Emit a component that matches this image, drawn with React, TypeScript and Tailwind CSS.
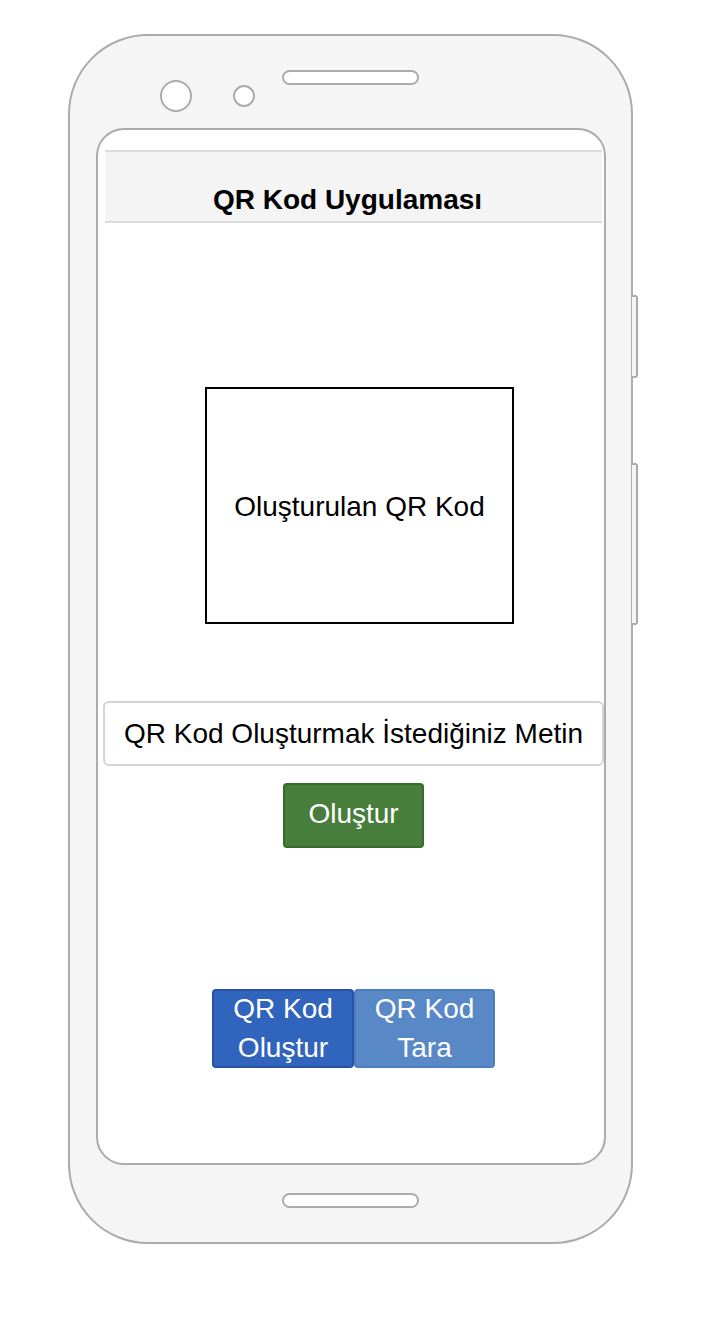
export default function App() {
  return (
    <div className="w-[706px] h-[1330px] bg-white pt-[34px] pl-[68px] font-['Liberation_Sans',Arial,sans-serif]">
      <div className="relative w-[565px] h-[1210px] rounded-[80px] border-2 border-[#ababab] bg-[#f5f5f5]">
        {/* side buttons */}
        <div className="absolute right-[-7px] top-[259px] w-[6px] h-[83px] bg-[#f5f5f5] border-2 border-l-0 border-[#ababab] rounded-r-[3px]" />
        <div className="absolute right-[-7px] top-[427px] w-[6px] h-[162px] bg-[#f5f5f5] border-2 border-l-0 border-[#ababab] rounded-r-[3px]" />
        {/* top area */}
        <div className="h-[92px] flex items-start pl-[90px]">
          <div className="mt-[44px] w-[32px] h-[32px] rounded-full border-2 border-[#ababab] bg-white" />
          <div className="mt-[49px] ml-[41px] w-[22px] h-[22px] rounded-full border-2 border-[#ababab] bg-white" />
          <div className="mt-[34px] ml-[27px] w-[137px] h-[15px] rounded-full border-2 border-[#ababab] bg-white" />
        </div>
        {/* screen */}
        <div className="ml-[26px] w-[510px] h-[1037px] rounded-[28px] border-2 border-[#ababab] bg-white flex flex-col">
          <div className="mt-[20px] ml-[7px] mr-[2px] h-[73px] bg-[#f4f4f4] border-y-2 border-[#dcdcdc] flex items-end justify-center pb-[5px] pr-[12px]">
            <span className="text-[28px] font-bold text-black leading-[32px]">QR Kod Uygulaması</span>
          </div>
          <div className="mt-[164px] ml-[107px] w-[309px] h-[237px] border-2 border-black flex items-center justify-center">
            <span className="text-[28px] text-black leading-[32px] mt-[2px]">Oluşturulan QR Kod</span>
          </div>
          <div className="mt-[77px] ml-[5px] w-[501px] h-[65px] rounded-[6px] border-2 border-[#d4d4d4] flex items-center justify-center">
            <span className="text-[28px] text-black leading-[32px]">QR Kod Oluşturmak İstediğiniz Metin</span>
          </div>
          <div className="mt-[17px] self-center ml-[5px] w-[141px] h-[65px] rounded-[4px] border-2 border-[#356b2c] bg-[#477e3c] flex items-center justify-center pb-[3px]">
            <span className="text-[28px] text-white leading-[32px]">Oluştur</span>
          </div>
          <div className="mt-[141px] self-center ml-[5px] flex">
            <div className="w-[142px] h-[79px] rounded-[4px] border-2 border-[#2751a3] bg-[#3165bd] flex items-center justify-center text-center pb-[1px]">
              <span className="text-[28px] text-white leading-[39px]">QR Kod<br />Oluştur</span>
            </div>
            <div className="w-[141px] h-[79px] rounded-[4px] border-2 border-[#4c7fbe] bg-[#5889c6] flex items-center justify-center text-center pb-[1px]">
              <span className="text-[28px] text-white leading-[39px]">QR Kod<br />Tara</span>
            </div>
          </div>
        </div>
        {/* bottom speaker */}
        <div className="mt-[28px] ml-[212px] w-[137px] h-[15px] rounded-full border-2 border-[#ababab] bg-white" />
      </div>
    </div>
  );
}
